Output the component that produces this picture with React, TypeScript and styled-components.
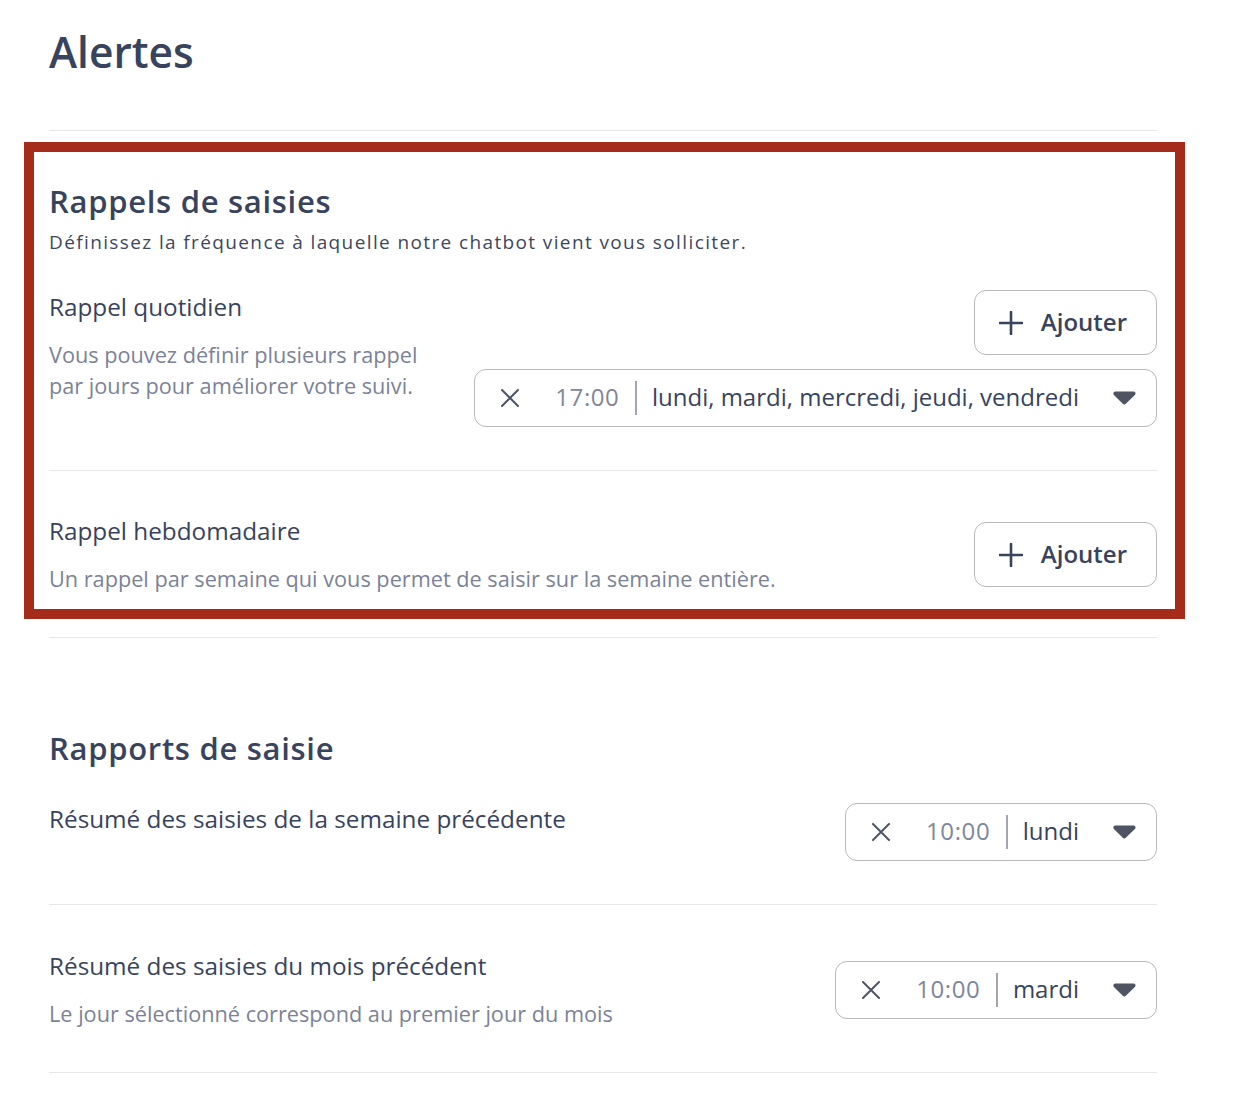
import styled, { createGlobalStyle } from "styled-components"

const GlobalStyle = createGlobalStyle`
  html, body {
    margin: 0;
    padding: 0;
    background: #ffffff;
  }
  body {
    font-family: "Open Sans", "Noto Sans", "Liberation Sans", sans-serif;
    color: #39445f;
  }
`

const Page = styled.main`
  width: 1108px;
  padding: 0 0 49px 49px;
`

const Title = styled.h1`
  margin: 26px 0 52px;
  font-size: 42.5px;
  line-height: 52px;
  font-weight: 600;
  color: #38435e;
`

const Divider = styled.div<{ $top?: number }>`
  height: 1px;
  background: #e6e7ea;
  margin-top: ${p => p.$top ?? 0}px;
`

const Highlight = styled.section`
  margin: 11px -28px 0 -25px;
  padding: 0 18px 0 15px;
  border: 10px solid #a52b1b;
`

const SectionTitle = styled.h2<{ $top: number }>`
  margin: ${p => p.$top}px 0 0;
  font-size: 31px;
  line-height: 36px;
  letter-spacing: 0.7px;
  font-weight: 600;
  color: #38435e;
`

const SectionText = styled.p`
  margin: 11px 0 0;
  font-size: 19px;
  line-height: 24px;
  letter-spacing: 1.38px;
  color: #3d4760;
`

const Row = styled.div<{ $top: number; $bottom: number; $center?: boolean }>`
  display: flex;
  justify-content: space-between;
  align-items: ${p => (p.$center ? "center" : "flex-start")};
  padding: ${p => p.$top}px 0 ${p => p.$bottom}px;
`

const TextCol = styled.div<{ $shift?: number }>`
  display: flex;
  flex-direction: column;
  padding-top: ${p => p.$shift ?? 0}px;
`

const Label = styled.div`
  padding-top: 2px;
  font-size: 24.3px;
  line-height: 28px;
  color: #38435e;
`

const Hint = styled.div<{ $width?: number }>`
  margin-top: 18px;
  font-size: 21.7px;
  line-height: 31px;
  color: #7b8298;
  max-width: ${p => (p.$width ? `${p.$width}px` : "none")};
`

const Controls = styled.div`
  display: flex;
  flex-direction: column;
  align-items: flex-end;
  gap: 14px;
`

const AddButton = styled.button`
  display: flex;
  align-items: center;
  gap: 18px;
  height: 65px;
  padding: 0 29px 0 24px;
  border: 1px solid #b7b8bc;
  border-radius: 12px;
  background: #ffffff;
  font-family: inherit;
  font-size: 24px;
  font-weight: 600;
  color: #38435e;
  cursor: pointer;
`

const ButtonText = styled.span`
  margin-bottom: 2px;
`

const Picker = styled.div`
  display: flex;
  align-items: center;
  height: 58px;
  box-sizing: border-box;
  padding: 0 20px 0 26px;
  border: 1px solid #b7b8bc;
  border-radius: 12px;
  background: #ffffff;
`

const ClearIcon = styled.span`
  display: flex;
  width: 18px;
  margin-right: 36px;
`

const Time = styled.span`
  margin-bottom: 3px;
  font-size: 24px;
  letter-spacing: 0.6px;
  color: #7f869a;
`

const Separator = styled.span`
  width: 1.5px;
  height: 34px;
  margin: 0 15px 0 16px;
  background: #a3a6ad;
`

const Days = styled.span`
  margin-bottom: 3px;
  font-size: 24px;
  color: #38435e;
`

const Caret = styled.span`
  display: flex;
  margin-left: 34px;
`

const PlusIcon = () => (
  <svg width="24" height="24" viewBox="0 0 24 24">
    <path d="M12 1v22M1 12h22" stroke="#38435e" strokeWidth="2.6" strokeLinecap="round" />
  </svg>
)

const CrossIcon = () => (
  <svg width="18" height="18" viewBox="0 0 18 18">
    <path d="M1 1l16 16M17 1L1 17" stroke="#4f5563" strokeWidth="2" strokeLinecap="round" />
  </svg>
)

const CaretIcon = () => (
  <svg width="23" height="14" viewBox="0 0 23 14">
    <path
      d="M2.4 0.6h18.2c1.8 0 2.6 2.1 1.3 3.3l-9.1 8.9c-0.8 0.8-2.2 0.8-3 0L0.9 3.9C-0.3 2.7 0.6 0.6 2.4 0.6z"
      fill="#4e5462"
    />
  </svg>
)

type ScheduleProps = {
  time: string;
  days: string;
}

function Schedule({ time, days }: ScheduleProps) {
  return (
    <Picker>
      <ClearIcon><CrossIcon /></ClearIcon>
      <Time>{time}</Time>
      <Separator />
      <Days>{days}</Days>
      <Caret><CaretIcon /></Caret>
    </Picker>
  )
}

function Add() {
  return (
    <AddButton>
      <PlusIcon />
      <ButtonText>Ajouter</ButtonText>
    </AddButton>
  )
}

export default function App() {
  return (
    <>
      <GlobalStyle />
      <Page>
        <Title>Alertes</Title>
        <Divider />

        <Highlight>
          <SectionTitle $top={31}>Rappels de saisies</SectionTitle>
          <SectionText>Définissez la fréquence à laquelle notre chatbot vient vous solliciter.</SectionText>

          <Row $top={36} $bottom={43}>
            <TextCol $shift={1}>
              <Label>Rappel quotidien</Label>
              <Hint $width={385}>Vous pouvez définir plusieurs rappel par jours pour améliorer votre suivi.</Hint>
            </TextCol>
            <Controls>
              <Add />
              <Schedule time="17:00" days="lundi, mardi, mercredi, jeudi, vendredi" />
            </Controls>
          </Row>
          <Divider />
          <Row $top={44} $bottom={15} $center>
            <TextCol>
              <Label>Rappel hebdomadaire</Label>
              <Hint>Un rappel par semaine qui vous permet de saisir sur la semaine entière.</Hint>
            </TextCol>
            <Add />
          </Row>
        </Highlight>
        <Divider $top={18} />

        <SectionTitle $top={92}>Rapports de saisie</SectionTitle>
        <Row $top={37} $bottom={43}>
          <TextCol>
            <Label>Résumé des saisies de la semaine précédente</Label>
          </TextCol>
          <Schedule time="10:00" days="lundi" />
        </Row>
        <Divider />
        <Row $top={45} $bottom={43} $center>
          <TextCol>
            <Label>Résumé des saisies du mois précédent</Label>
            <Hint>Le jour sélectionné correspond au premier jour du mois</Hint>
          </TextCol>
          <Schedule time="10:00" days="mardi" />
        </Row>
        <Divider />
      </Page>
    </>
  )
}
